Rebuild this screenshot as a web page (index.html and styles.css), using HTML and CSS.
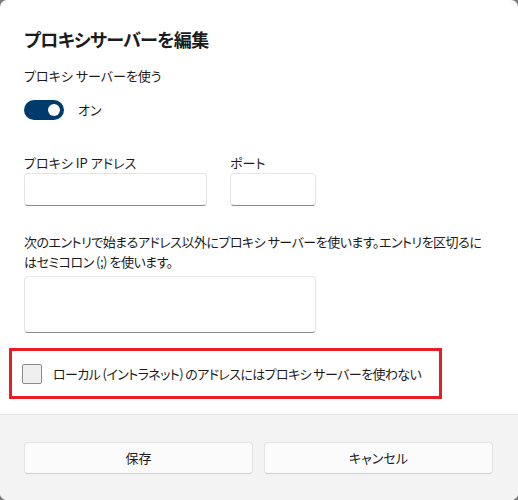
FILE: index.html
```html
<!DOCTYPE html>
<html lang="ja">
<head>
    <meta charset="UTF-8">
    <meta name="viewport" content="width=device-width, initial-scale=1.0">
    <title>プロキシサーバーを編集</title>
    <link rel="stylesheet" href="styles.css">
</head>
<body>
    <div class="dialog">
        <div class="content">
            <h1 class="title">プロキシサーバーを編集</h1>
            <p class="label">プロキシ サーバーを使う</p>

            <div class="toggle-row">
                <span class="toggle on"><span class="knob"></span></span>
                <span class="toggle-text">オン</span>
            </div>

            <div class="fields">
                <div class="field">
                    <label class="label">プロキシ IP アドレス</label>
                    <input class="input ip" type="text">
                </div>
                <div class="field">
                    <label class="label">ポート</label>
                    <input class="input port" type="text">
                </div>
            </div>

            <p class="desc">次のエントリで始まるアドレス以外にプロキシ サーバーを使います。エントリを区切るにはセミコロン (;) を使います。</p>
            <textarea class="input area"></textarea>

            <div class="highlight">
                <label class="check-row">
                    <span class="checkbox"></span>
                    <span class="check-text">ローカル (イントラネット) のアドレスにはプロキシ サーバーを使わない</span>
                </label>
            </div>
        </div>

        <div class="footer">
            <button class="btn">保存</button>
            <button class="btn">キャンセル</button>
        </div>
    </div>
</body>
</html>
```

FILE: styles.css
```css
* {
    margin: 0;
    padding: 0;
    box-sizing: border-box;
}

body {
    font-family: "Noto Sans CJK JP", "Noto Sans", sans-serif;
    font-feature-settings: "palt";
    background-color: #7a7a7a;
    color: #1b1b1b;
    font-size: 13px;
    line-height: 20px;
}

.dialog {
    width: 518px;
    height: 500px;
    background: #fff;
    border-radius: 7px;
    overflow: hidden;
    display: flex;
    flex-direction: column;
}

.content {
    flex: 1;
    padding: 25px 24px 0;
}

.title {
    font-size: 18px;
    line-height: 28px;
    font-weight: 700;
    letter-spacing: -0.6px;
    margin-bottom: 13px;
}

.label {
    display: block;
}

.toggle-row {
    display: flex;
    align-items: center;
    gap: 14px;
    margin-top: 14px;
}

.toggle {
    width: 40px;
    height: 20px;
    border-radius: 10px;
    background: #003b6b;
    display: flex;
    align-items: center;
    justify-content: flex-end;
    padding-right: 4px;
}

.knob {
    width: 12px;
    height: 12px;
    border-radius: 50%;
    background: #fff;
}

.fields {
    display: flex;
    gap: 23px;
    margin-top: 33px;
}

.input {
    display: block;
    background: #fff;
    border: 1px solid #e5e5e5;
    border-bottom-color: #8a8a8a;
    border-radius: 4px;
    font: inherit;
    resize: none;
    outline: none;
}

.ip {
    width: 183px;
    height: 33px;
}

.port {
    width: 86px;
    height: 33px;
}

.desc {
    margin-top: 26px;
    max-width: 462px;
    letter-spacing: -0.5px;
}

.area {
    width: 292px;
    height: 57px;
    margin-top: 4px;
}

.highlight {
    margin: 15px 0 0 -15px;
    width: 433px;
    height: 51px;
    border: 3px solid #ec1c24;
}

.check-row {
    display: flex;
    align-items: center;
    gap: 11px;
    height: 45px;
    padding-left: 10px;
    white-space: nowrap;
    letter-spacing: -0.6px;
}

.checkbox {
    width: 20px;
    height: 20px;
    border: 1px solid #8a8a8a;
    border-radius: 2px;
    background: #efefef;
}

.footer {
    height: 86px;
    background: #f3f3f3;
    border-top: 1px solid #e5e5e5;
    display: flex;
    gap: 11px;
    padding: 27px 25px 0 24px;
}

.btn {
    flex: 1;
    height: 32px;
    background: #fbfbfb;
    border: 1px solid #e2e2e2;
    border-bottom-color: #cfcfcf;
    border-radius: 4px;
    font: inherit;
    color: #1b1b1b;
}
```
